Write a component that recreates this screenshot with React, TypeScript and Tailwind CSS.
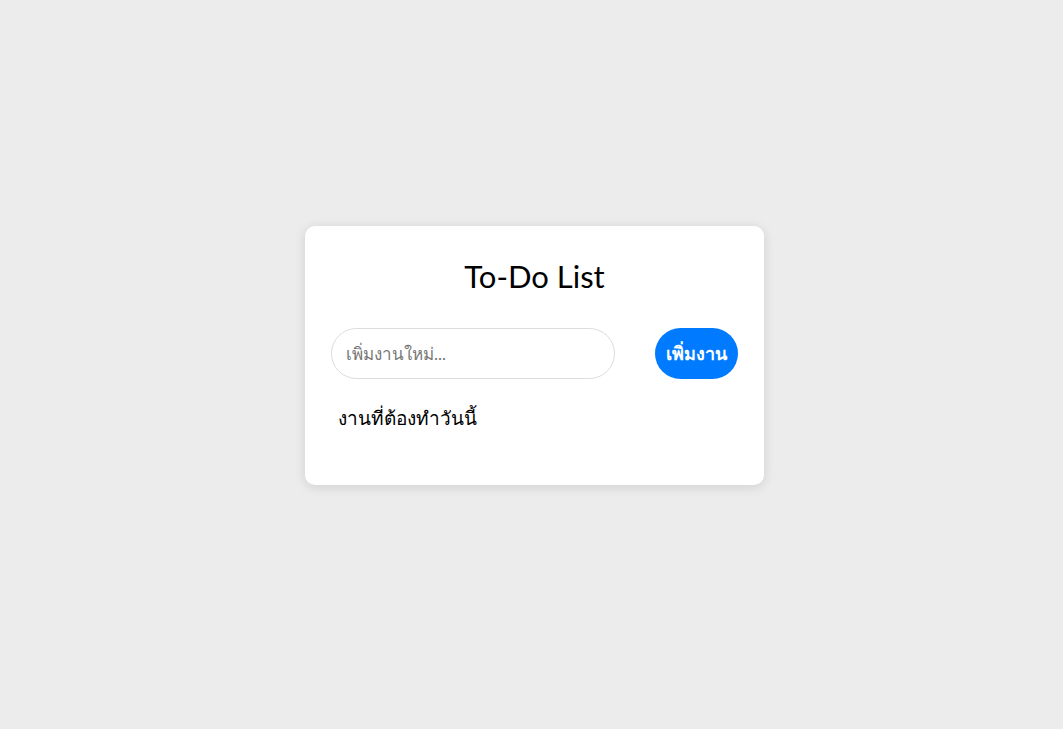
import React, { useState } from 'react';

export default function App() {
  const [task, setTask] = useState('');

  return (
    <div className="min-h-screen w-full flex items-center justify-center bg-[#ececec] pl-[6px] pb-[19px]" style={{ fontFamily: 'Lato, "Noto Sans", sans-serif' }}>
      <div className="w-[459px] bg-white rounded-[10px] shadow-[0_2px_12px_rgba(0,0,0,0.12)] px-[26px] pt-[30px] pb-[52px]">
        <h1 className="text-center text-[31px] leading-[40px] text-black">To-Do List</h1>

        <div className="mt-[32px] flex items-center justify-between">
          <input
            type="text"
            value={task}
            onChange={(e) => setTask(e.target.value)}
            placeholder="เพิ่มงานใหม่..."
            className="w-[284px] h-[51px] rounded-full border border-[#dcdcdc] px-[14px] text-[17px] text-black placeholder:text-[#777] outline-none"
          />
          <button className="h-[51px] w-[83px] rounded-full bg-[#007bff] text-white font-bold text-[18px]">
            เพิ่มงาน
          </button>
        </div>

        <h2 className="mt-[24px] pl-[7px] text-[19px] leading-[30px] text-black">งานที่ต้องทำวันนี้</h2>
      </div>
    </div>
  );
}
